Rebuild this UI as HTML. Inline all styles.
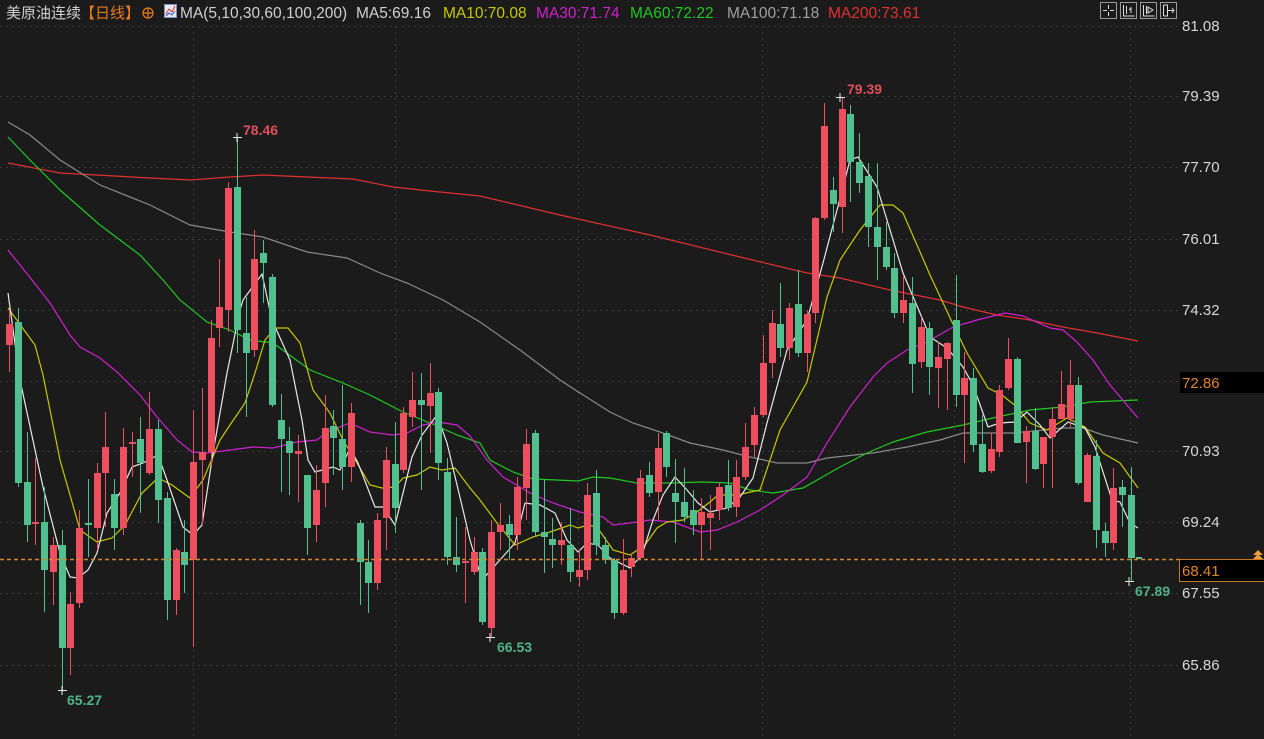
<!DOCTYPE html>
<html><head><meta charset="utf-8"><style>
html,body{margin:0;padding:0;background:#1b1b1b;width:1264px;height:739px;overflow:hidden}
svg{display:block}
text{font-family:"Liberation Sans","Noto Sans CJK SC",sans-serif}
</style></head><body>
<svg id="s" width="1264" height="739" xmlns="http://www.w3.org/2000/svg">
<rect width="1264" height="739" fill="#1b1b1b"/>
<g id="grid" stroke="#3a3a3a" stroke-width="1" stroke-dasharray="2,4"></g>
<g id="ma" fill="none" stroke-width="1.2"></g>
<g id="cd"></g>
<line x1="0" y1="559.5" x2="1180" y2="559.5" stroke="#d0842e" stroke-width="1.6" stroke-dasharray="4,3"/>
<g font-size="15" fill="#d8d8d8">
<text x="1182" y="31">81.08</text><text x="1182" y="101">79.39</text><text x="1182" y="172">77.70</text>
<text x="1182" y="244">76.01</text><text x="1182" y="315">74.32</text><text x="1182" y="456">70.93</text>
<text x="1182" y="527">69.24</text><text x="1182" y="598">67.55</text><text x="1182" y="670">65.86</text>
</g>
<rect x="1180" y="372" width="84" height="21" fill="#000"/>
<text x="1182" y="388" font-size="15" fill="#e0842a">72.86</text>
<rect x="1179.5" y="559.5" width="85" height="22" fill="#000" stroke="#c8781e"/>
<text x="1182" y="576" font-size="15" fill="#e0842a">68.41</text>
<path d="M1253 555 l5 -5 l5 5 z M1253 559 l5 -5 l5 5 z" fill="#e8a040"/>
<g font-size="14" font-weight="bold">
<text x="243" y="135" fill="#e0505a">78.46</text>
<text x="847" y="94" fill="#e0505a">79.39</text>
<text x="67" y="705" fill="#4fb38a">65.27</text>
<text x="497" y="652" fill="#4fb38a">66.53</text>
<text x="1135" y="596" fill="#4fb38a">67.89</text>
</g>
<g stroke="#e8e8e8" stroke-width="1">
<path d="M233 137.5h9M237 133v9M836 97.5h9M840 93v9M58 690.5h9M62 686v9M486 637.5h9M490 633v9M1125 581.5h9M1129 577v9"/>
</g>
<g font-size="15.5">
<text x="6" y="18" fill="#d0d0d0" font-size="15">美原油连续</text>
<text x="80" y="18" fill="#e87a1e" font-size="15">【日线】</text>
<circle cx="148" cy="13" r="5" fill="none" stroke="#e87a1e" stroke-width="1.2"/>
<path d="M143 13h10M148 8v10" stroke="#e87a1e" stroke-width="1.2"/>
<rect x="164.5" y="4.5" width="12" height="13" fill="#e8e8f0" stroke="#8090c0"/>
<path d="M166 14 l3 -5 l3 3 l3 -6" stroke="#e03030" fill="none"/>
<path d="M166 16 l3 -3 l3 2 l3 -4" stroke="#3050d0" fill="none"/>
<text x="180" y="18" fill="#d0d0d0">MA(5,10,30,60,100,200)</text>
<text x="356" y="18" fill="#d0d0d0">MA5:69.16</text>
<text x="443" y="18" fill="#c8c800">MA10:70.08</text>
<text x="536" y="18" fill="#d020d0">MA30:71.74</text>
<text x="630" y="18" fill="#20c820">MA60:72.22</text>
<text x="727" y="18" fill="#a0a0a0">MA100:71.18</text>
<text x="828" y="18" fill="#e03030">MA200:73.61</text>
</g>
<g fill="none" stroke="#9a9a9a" stroke-width="1">
<rect x="1100.5" y="2.5" width="16" height="16"/><rect x="1120.5" y="2.5" width="16" height="16"/>
<rect x="1140.5" y="2.5" width="16" height="16"/><rect x="1160.5" y="2.5" width="16" height="16"/>
<path d="M1108.5 5v4M1108.5 12v4M1103 10.5h4M1110 10.5h4" stroke="#ddd"/>
<path d="M1123.5 5v11h11M1126.5 6v8M1131 7v6M1129 10l2 -2" stroke="#ddd"/>
<path d="M1143.5 5v11h11M1146.5 6v8M1148 7l5 3l-5 3z" stroke="#ddd"/>
<path d="M1163.5 5v11M1163.5 5h4v11h-4M1168 10.5h6M1172 8l2 2.5l-2 2.5" stroke="#ddd"/>
</g>
</svg>
<script>
var NS="http://www.w3.org/2000/svg";
function el(p,t,a){var e=document.createElementNS(NS,t);for(var k in a)e.setAttribute(k,a[k]);p.appendChild(e);return e;}
var g=document.getElementById('grid');
[26,96,167,239,310,381,451,522,593,665].forEach(function(y){el(g,'line',{x1:0,y1:y+.5,x2:1178,y2:y+.5});});
[193,395,578,762,954,1130].forEach(function(x){el(g,'line',{x1:x+.5,y1:26,x2:x+.5,y2:739});});
var D=[[324,345,310,372,'r'],[322,483,308,487,'g'],[482,525,432,542,'g'],[522,524,458,545,'r'],[522,570,487,612,'g'],[545,572,537,605,'r'],[545,648,530,692,'g'],[604,648,592,675,'r'],[528,603,510,608,'r'],[523,525,479,557,'g'],
[473,528,463,550,'r'],[447,473,412,527,'r'],[494,528,479,550,'g'],[447,528,428,535,'r'],[442,444,432,477,'r'],[439,463,417,513,'g'],[429,473,392,475,'r'],[429,500,420,523,'g'],[498,600,492,620,'g'],[550,600,548,615,'r'],
[552,565,520,593,'g'],[462,560,410,647,'r'],[452,460,388,525,'r'],[338,452,320,465,'r'],[307,328,259,347,'r'],[188,310,182,332,'r'],[187,330,137,353,'g'],[333,353,297,417,'g'],[259,350,230,357,'r'],[253,263,240,303,'g'],
[277,405,274,407,'g'],[420,439,394,492,'g'],[441,453,427,495,'g'],[451,454,435,502,'r'],[475,528,475,555,'g'],[490,525,465,542,'r'],[428,483,395,507,'r'],[426,438,410,475,'g'],[439,467,385,490,'g'],[413,467,403,482,'r'],
[523,562,520,605,'g'],[562,583,540,613,'g'],[520,583,513,590,'r'],[460,518,447,550,'r'],[464,508,422,533,'g'],[413,470,407,473,'r'],[400,417,372,427,'r'],[400,405,373,490,'g'],[393,406,363,453,'r'],[392,463,388,480,'g'],
[472,557,458,565,'g'],[557,565,517,572,'g'],[561,563,527,603,'r'],[552,572,537,575,'r'],[552,622,548,625,'g'],[532,628,520,638,'r'],[525,532,503,550,'r'],[524,535,515,560,'g'],[487,535,477,550,'r'],[444,488,429,520,'r'],
[433,532,430,537,'g'],[532,537,480,573,'g'],[539,545,518,568,'g'],[540,545,522,565,'r'],[545,572,508,582,'g'],[570,577,550,587,'r'],[495,570,483,580,'r'],[493,545,470,555,'g'],[545,560,537,564,'g'],[560,613,558,619,'g'],
[570,613,539,615,'r'],[558,567,555,577,'r'],[478,558,470,560,'r'],[475,493,462,497,'g'],[448,492,433,520,'r'],[433,467,431,477,'g'],[493,502,459,543,'g'],[502,517,468,522,'g'],[510,525,490,535,'g'],[512,525,498,559,'r'],
[513,518,495,550,'r'],[487,510,483,520,'r'],[485,508,460,511,'g'],[477,507,460,517,'r'],[447,477,423,480,'r'],[415,445,407,457,'r'],[363,415,335,417,'r'],[323,363,310,378,'r'],[324,348,283,357,'g'],[308,348,303,360,'r'],
[304,353,270,357,'g'],[314,353,310,372,'r'],[218,313,217,323,'r'],[126,218,103,220,'r'],[190,204,177,232,'g'],[109,207,98,233,'r'],[114,162,105,202,'g'],[162,183,133,193,'g'],[176,227,163,247,'g'],[227,247,163,280,'g'],
[247,267,222,270,'g'],[268,313,253,318,'g'],[300,313,275,323,'r'],[303,364,277,393,'g'],[327,362,317,368,'r'],[328,367,322,395,'g'],[357,368,342,408,'r'],[343,359,342,410,'r'],[320,395,275,407,'g'],[378,395,352,463,'r'],
[378,445,368,452,'g'],[444,472,415,473,'g'],[449,471,433,473,'r'],[390,452,385,457,'r'],[359,388,338,390,'r'],[359,443,357,443,'g'],[431,442,426,483,'r'],[431,469,408,470,'g'],[437,464,437,488,'r'],[419,437,407,488,'r'],
[404,419,371,419,'r'],[385,419,360,427,'r'],[385,483,377,485,'g'],[455,502,453,502,'r'],[456,530,440,548,'g'],[531,543,523,557,'g'],[488,543,468,550,'r'],[487,495,480,527,'g'],[495,558,467,582,'g']];
var cd=document.getElementById('cd');
D.forEach(function(d,i){var x=Math.round(9+8.765*i);var c=d[4]=='r'?'#ee4f5f':'#52c08e';
el(cd,'rect',{x:x,y:d[2],width:1,height:Math.max(1,d[3]-d[2]),fill:c});
el(cd,'rect',{x:x-3,y:d[0],width:7,height:Math.max(2,d[1]-d[0]),fill:c});});
el(cd,'rect',{x:1136,y:557,width:6,height:2,fill:'#52c08e'});
var M={
'#e03030':[[8,163],[60,173],[150,178],[190,180],[230,177],[263,175],[307,177],[353,179],[393,187],[430,191],[480,196],[560,215],[650,235],[740,257],[807,273],[840,278],[890,290],[940,300],[963,307],[997,315],[1030,320],[1063,327],[1097,333],[1138,341]],
'#8a8a8a':[[8,122],[30,135],[60,160],[100,185],[150,205],[190,225],[230,232],[263,237],[307,252],[347,258],[380,273],[407,283],[443,300],[480,322],[520,350],[560,380],[580,393],[610,412],[633,423],[660,432],[690,443],[723,450],[750,457],[777,463],[807,463],[827,458],[873,453],[907,447],[940,440],[963,433],[1013,433],[1063,428],[1083,428],[1103,435],[1138,443]],
'#20c820':[[8,137],[30,160],[60,190],[100,225],[140,255],[163,280],[180,300],[207,322],[230,330],[250,340],[273,343],[310,370],[343,383],[370,395],[403,412],[430,423],[457,435],[480,443],[490,460],[513,472],[533,479],[557,480],[578,481],[593,477],[610,478],[637,483],[670,483],[703,482],[730,483],[750,490],[773,493],[803,488],[840,467],[867,453],[893,442],[927,432],[963,425],[997,417],[1030,410],[1063,407],[1090,402],[1138,400]],
'#d020d0':[[8,250],[32,280],[50,303],[70,335],[80,347],[100,358],[117,372],[140,395],[157,417],[177,440],[192,452],[207,453],[230,450],[253,447],[273,448],[297,442],[317,440],[327,432],[350,423],[370,432],[393,435],[407,433],[423,425],[438,422],[457,425],[470,436],[487,460],[503,477],[530,493],[553,503],[580,512],[603,517],[613,525],[630,523],[650,520],[673,522],[700,532],[717,530],[737,522],[760,510],[783,495],[807,477],[827,443],[850,407],[873,377],[887,363],[907,350],[927,342],[953,327],[977,320],[1005,313],[1023,316],[1050,328],[1063,330],[1077,342],[1093,360],[1110,385],[1138,418]],
'#c8c800':[[8,308],[35,345],[43,375],[60,460],[80,530],[97,542],[112,538],[125,525],[142,493],[158,478],[172,485],[190,498],[203,480],[220,440],[230,425],[245,403],[255,373],[265,340],[275,328],[288,328],[300,343],[313,390],[330,413],[343,440],[357,463],[370,485],[382,488],[395,487],[403,478],[417,475],[430,467],[442,470],[455,468],[470,488],[480,500],[497,523],[515,545],[533,537],[550,532],[570,525],[578,528],[588,525],[597,527],[613,550],[630,555],[645,545],[657,528],[667,522],[683,520],[697,512],[710,502],[718,495],[737,495],[760,490],[780,430],[807,382],[827,297],[840,260],[860,230],[880,205],[893,205],[903,213],[917,245],[930,275],[952,322],[967,353],[988,388],[1002,395],[1017,407],[1030,423],[1047,430],[1067,418],[1085,427],[1103,453],[1120,463],[1138,488]],
'#e8e8e8':[[8,293],[20,380],[43,487],[60,553],[70,577],[78,578],[88,570],[97,553],[107,513],[120,493],[132,467],[143,463],[158,455],[167,480],[183,527],[193,535],[202,525],[213,453],[227,373],[240,310],[243,300],[262,274],[272,320],[290,360],[302,420],[308,460],[315,472],[333,467],[340,470],[350,448],[358,463],[375,507],[383,507],[395,525],[412,457],[422,435],[437,415],[447,443],[463,510],[470,540],[482,580],[515,543],[525,503],[540,505],[555,513],[567,540],[578,552],[587,543],[598,545],[610,558],[630,568],[642,555],[653,520],[663,495],[675,477],[687,490],[698,503],[710,512],[727,508],[740,497],[753,478],[767,423],[787,350],[807,320],[823,263],[837,210],[850,160],[858,157],[877,187],[887,220],[903,273],[920,313],[930,337],[947,348],[963,367],[973,385],[988,427],[1000,423],[1015,422],[1027,412],[1040,425],[1050,438],[1068,422],[1085,428],[1095,447],[1112,500],[1120,502],[1130,523],[1138,528]]};
var mg=document.getElementById('ma');
for(var c in M){el(mg,'polyline',{points:M[c].map(function(p){return p.join(',')}).join(' '),stroke:c});}
</script>
</body></html>
